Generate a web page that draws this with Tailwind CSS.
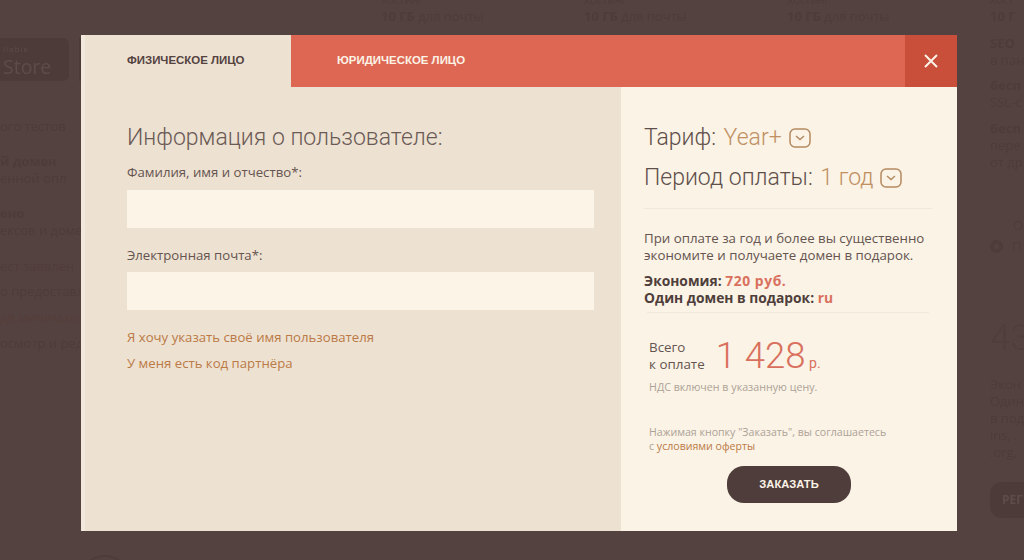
<!DOCTYPE html>
<html lang="ru">
<head>
<meta charset="utf-8">
<script src="https://cdn.jsdelivr.net/npm/@tailwindcss/browser@4"></script>
</head>
<body class="m-0 bg-[#544240]">
<div class="relative w-[1024px] h-[560px] overflow-hidden bg-[#544240] font-['Open_Sans',sans-serif] text-[#4d3c3a]">
  <!-- dimmed page behind the dialog -->
  <div class="flex h-full blur-[0.5px] text-[13px] leading-[17px] whitespace-nowrap">
    <div class="w-[81px] shrink-0">
      <div class="mt-[38px] flex gap-[10px] h-[43px]">
        <div class="w-[69px] rounded-r-md bg-[#4c3b39] text-[#5d4c4a] pl-[3px] flex flex-col">
          <span class="text-[8px] leading-[8px] mt-[7px] tracking-[1px]">ilable</span>
          <span class="text-[19.5px] leading-[22px] mt-[3px]">Store</span>
        </div>
        <div class="w-[2px] bg-[#4c3b39]"></div>
      </div>
      <div class="mt-[37px]">ого тестов</div>
      <div class="mt-[18px] font-bold">й домен</div>
      <div>енной опл</div>
      <div class="mt-[18px] font-bold">ено</div>
      <div>ексов и доме</div>
      <div class="mt-[19px] text-[#513c39]">ест заявлен</div>
      <div class="mt-[8px]">о предоставл</div>
      <div class="mt-[9px] text-[#563e3a]">дя минималь</div>
      <div class="mt-[9px]">осмотр и ред</div>
      <div class="mt-[203px] ml-[80px] w-[50px] h-[50px] rounded-full border-2 border-[#4d3c3a]"></div>
    </div>
    <div class="w-[300px] shrink-0"></div>
    <div class="w-[203px] shrink-0 mt-[-7px]"><div class="text-[11px] leading-[13px]">Хостинг</div><div class="mt-[3px] leading-[14px] font-bold">10 ГБ <span class="font-normal">для почты</span></div></div>
    <div class="w-[203px] shrink-0 mt-[-7px]"><div class="text-[11px] leading-[13px]">Хостинг</div><div class="mt-[3px] leading-[14px] font-bold">10 ГБ <span class="font-normal">для почты</span></div></div>
    <div class="w-[203px] shrink-0 mt-[-7px]"><div class="text-[11px] leading-[13px]">Хостинг</div><div class="mt-[3px] leading-[14px] font-bold">10 ГБ <span class="font-normal">для почты</span></div></div>
    <div class="w-[34px] shrink-0">
      <div class="mt-[-7px] leading-[13px] text-[11px]">Хост</div>
      <div class="mt-[3px] leading-[14px] font-bold">10 Г</div>
      <div class="mt-[12px] font-bold">SEO</div>
      <div>в пан</div>
      <div class="mt-[8px] font-bold">бесп</div>
      <div>SSL-с</div>
      <div class="mt-[9px] font-bold">бесп</div>
      <div>пере</div>
      <div>от др</div>
      <div class="mt-[46px] pl-[23px]">О</div>
      <div class="mt-[4px] flex items-center gap-[9px]"><span class="w-[13px] h-[13px] rounded-full border-[4px] border-[#4d3c3a]"></span><span>П</span></div>
      <div class="mt-[61px] text-[37px] leading-[44px] font-light text-[#4f3e3c] font-['Roboto',sans-serif]">43</div>
      <div class="mt-[16px]">Экон</div>
      <div>Один</div>
      <div>в под</div>
      <div>ins, .</div>
      <div>.org,</div>
      <div class="mt-[21px] h-[36px] w-[40px] rounded-l-xl bg-[#4c3b39] pl-[12px] text-[#5d4c4a] text-[12px] font-bold leading-[36px]">РЕГ</div>
    </div>
  </div>

  <!-- dialog -->
  <div class="absolute left-[81px] top-[35px] w-[876px] h-[496px] flex flex-col">
    <div class="flex h-[52px] shrink-0 bg-[#de6753] text-[11.45px] font-bold uppercase font-['Liberation_Sans',sans-serif]">
      <div class="w-[210px] bg-[#ede1d2] border-l-[4px] border-[#f2e9dc] text-[#54423f] pl-[42px] leading-[51px]">Физическое лицо</div>
      <div class="flex-1 pl-[46px] text-[#fbf3e6] leading-[51px]">Юридическое лицо</div>
      <div class="w-[52px] bg-[#c94f3b] flex items-center justify-center">
        <svg width="16" height="16" viewBox="0 0 16 16" fill="none" stroke="#fbf3e6" stroke-width="2"><path d="M2 2l12 12M14 2L2 14"/></svg>
      </div>
    </div>
    <div class="flex flex-1">
      <div class="w-[540px] bg-[#ede1d2] border-l-[4px] border-[#f2e9dc] pl-[42px] pr-[27px] pt-[37px] text-[#65544f]">
        <h2 class="text-[23px] leading-[28px] font-light text-[#6a5a55] font-['Roboto',sans-serif]">Информация о пользователе:</h2>
        <div class="mt-[10px] text-[13.2px] leading-[20px]">Фамилия, имя и отчество*:</div>
        <div class="mt-[8px] h-[38px] bg-[#fbf4e7]"></div>
        <div class="mt-[17px] text-[13.2px] leading-[20px]">Электронная почта*:</div>
        <div class="mt-[7px] h-[38px] bg-[#fbf4e7]"></div>
        <div class="mt-[17px] text-[13.2px] leading-[20px] text-[#bb7a45]">Я хочу указать своё имя пользователя</div>
        <div class="mt-[6px] text-[13.2px] leading-[20px] text-[#bb7a45]">У меня есть код партнёра</div>
      </div>
      <div class="flex-1 bg-[#faf3e6] pl-[23px] pr-[25px] pt-[37px] text-[#65544f] flex flex-col">
        <div class="text-[23px] leading-[28px] font-light text-[#5f4f4a] font-['Roboto',sans-serif] flex items-center gap-[7px]">
          <span>Тариф: <span class="ml-[2px] text-[#c08f62]">Year+</span></span>
          <svg width="22" height="20" viewBox="0 0 22 20" fill="none" stroke="#b58a60" stroke-width="1.5"><rect x="1" y="1" width="20" height="18" rx="5"/><path d="M7 8l4 3.5L15 8"/></svg>
        </div>
        <div class="mt-[12px] text-[23px] leading-[28px] font-light text-[#5f4f4a] font-['Roboto',sans-serif] flex items-center gap-[7px]">
          <span>Период оплаты: <span class="ml-[2px] text-[#c08f62]">1 год</span></span>
          <svg width="22" height="20" viewBox="0 0 22 20" fill="none" stroke="#b58a60" stroke-width="1.5"><rect x="1" y="1" width="20" height="18" rx="5"/><path d="M7 8l4 3.5L15 8"/></svg>
        </div>
        <div class="mt-[16px] border-t border-[#f1e8d9]"></div>
        <div class="mt-[21px] text-[13.3px] leading-[17px] whitespace-nowrap">При оплате за год и более вы существенно<br>экономите и получаете домен в подарок.</div>
        <div class="mt-[8px] text-[13.8px] leading-[17px] font-bold text-[#4f3e3b] whitespace-nowrap">Экономия: <span class="text-[#d9705d] tracking-[0.6px]">720 руб.</span><br>Один домен в подарок: <span class="text-[#d9705d]">ru</span></div>
        <div class="mt-[6px] mx-[3px] border-t border-[#f1e8d9]"></div>
        <div class="mt-[13px] ml-[5px] flex items-center gap-[11px]">
          <div class="text-[13.4px] leading-[17px]">Всего<br>к оплате</div>
          <div class="mt-[8px] text-[#d9705d] font-light font-['Roboto',sans-serif] text-[36.5px] leading-[44px] whitespace-nowrap">1 428<span class="text-[14px] font-normal"> р.</span></div>
        </div>
        <div class="mt-[-5px] ml-[5px] text-[10.7px] leading-[14px] text-[#aea296]">НДС включен в указанную цену.</div>
        <div class="mt-[31px] ml-[5px] text-[10.6px] leading-[14px] text-[#aea296] whitespace-nowrap">Нажимая кнопку "Заказать", вы соглашаетесь<br>с <span class="text-[#bb7a45]">условиями оферты</span></div>
        <div class="mt-[13px] self-center w-[124px] h-[37px] rounded-[17px] bg-[#4f3d3b] text-[#fbf3e6] text-[11.2px] font-bold leading-[36px] text-center font-['Liberation_Sans',sans-serif] ml-[2px]">ЗАКАЗАТЬ</div>
      </div>
    </div>
  </div>
</div>
</body>
</html>
